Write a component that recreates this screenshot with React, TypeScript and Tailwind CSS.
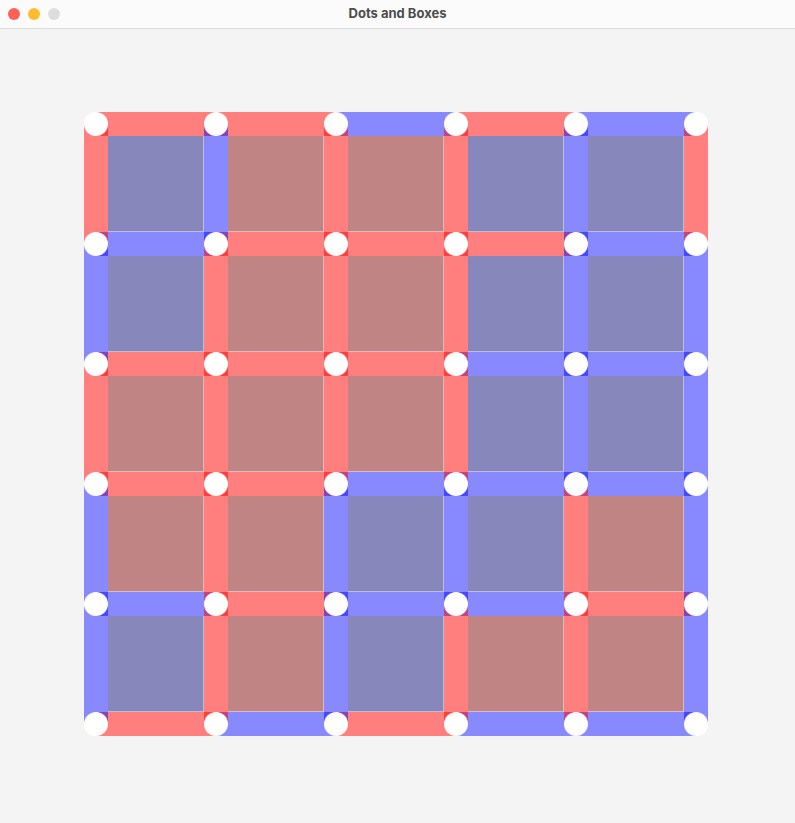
import React from 'react'

type Owner = 'r' | 'b'

const PITCH = 120
const HALF = 12

// horizontal edges, one row per dot row, one letter per segment
const H_EDGES: Owner[][] = [
    ['r', 'r', 'b', 'r', 'b'],
    ['b', 'r', 'r', 'r', 'b'],
    ['r', 'r', 'r', 'b', 'b'],
    ['r', 'r', 'b', 'b', 'b'],
    ['b', 'r', 'b', 'b', 'r'],
    ['r', 'b', 'r', 'b', 'b'],
]

// vertical edges, one array per dot column, top to bottom
const V_EDGES: Owner[][] = [
    ['r', 'b', 'r', 'b', 'b'],
    ['b', 'r', 'r', 'r', 'r'],
    ['r', 'r', 'r', 'b', 'b'],
    ['r', 'r', 'r', 'b', 'r'],
    ['b', 'b', 'b', 'r', 'r'],
    ['r', 'b', 'b', 'b', 'b'],
]

const BOXES: Owner[][] = [
    ['b', 'r', 'r', 'b', 'b'],
    ['b', 'r', 'r', 'b', 'b'],
    ['r', 'r', 'r', 'b', 'b'],
    ['r', 'r', 'b', 'b', 'r'],
    ['b', 'r', 'b', 'r', 'r'],
]

const lineColor = (o: Owner) => (o === 'r' ? 'bg-[rgba(255,0,0,0.5)]' : 'bg-[rgba(0,0,255,0.467)]')
const boxColor = (o: Owner) => (o === 'r' ? 'bg-[#c08484]' : 'bg-[#8787bb]')

function Board() {
    return (
        <div className="relative w-[624px] h-[624px] rounded-[12px] bg-white">
            {BOXES.map((row, j) =>
                row.map((owner, i) => (
                    <div
                        key={`box-${i}-${j}`}
                        className={`absolute w-[96px] h-[96px] border-r border-b border-[rgba(255,255,255,0.45)] ${boxColor(owner)}`}
                        style={{ left: HALF * 2 + i * PITCH, top: HALF * 2 + j * PITCH }}
                    />
                ))
            )}
            {H_EDGES.map((row, j) =>
                row.map((owner, i) => (
                    <div
                        key={`h-${i}-${j}`}
                        className={`absolute w-[120px] h-[24px] ${lineColor(owner)}`}
                        style={{ left: HALF + i * PITCH, top: j * PITCH }}
                    />
                ))
            )}
            {V_EDGES.map((col, k) =>
                col.map((owner, j) => (
                    <div
                        key={`v-${k}-${j}`}
                        className={`absolute w-[24px] h-[120px] ${lineColor(owner)}`}
                        style={{ left: k * PITCH, top: HALF + j * PITCH }}
                    />
                ))
            )}
            {Array.from({ length: 6 }).map((_, j) =>
                Array.from({ length: 6 }).map((_, i) => (
                    <div
                        key={`dot-${i}-${j}`}
                        className="absolute size-[24px] rounded-full bg-white"
                        style={{ left: i * PITCH, top: j * PITCH }}
                    />
                ))
            )}
        </div>
    )
}

export default function App() {
    return (
        <div className="w-[795px] h-[823px] flex flex-col bg-[#f4f4f4] font-['Inter','Liberation_Sans',sans-serif]">
            <div className="relative h-[29px] flex items-center justify-center bg-[#fbfbfb] border-b border-[#dcdcdc]">
                <div className="absolute left-[8px] top-[8px] flex gap-[8px]">
                    <span className="size-[12px] rounded-full bg-[#ff5f57]" />
                    <span className="size-[12px] rounded-full bg-[#febc2e]" />
                    <span className="size-[12px] rounded-full bg-[#dddddd]" />
                </div>
                <span className="text-[13px] font-bold text-[#4d4d4d]">Dots and Boxes</span>
            </div>
            <div className="flex-1 pl-[84px] pt-[83px]">
                <Board />
            </div>
        </div>
    )
}
